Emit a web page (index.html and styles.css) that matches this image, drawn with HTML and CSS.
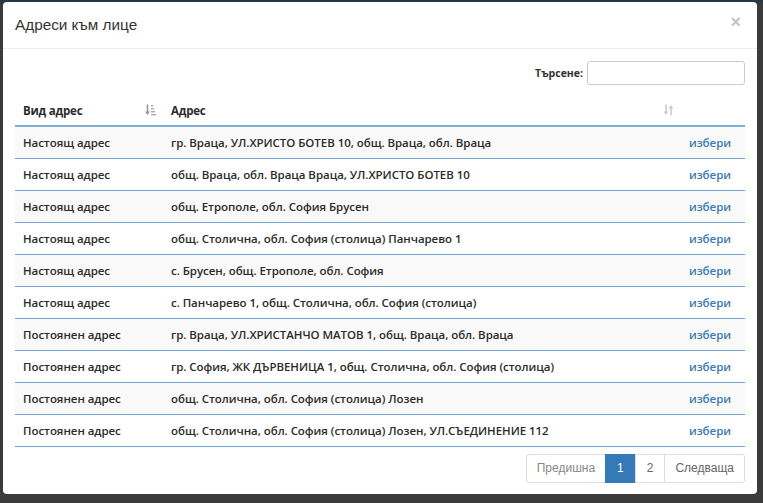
FILE: index.html
```html
<!DOCTYPE html>
<html lang="bg">
<head><meta charset="utf-8"><link rel="stylesheet" href="styles.css"></head>
<body>
<div class="backdrop">
  <div class="modal">
    <div class="modal-header">
      <h4 class="title">Адреси към лице</h4>
      <span class="close">×</span>
    </div>
    <div class="modal-body">
      <div class="search">
        <label>Търсене:</label>
        <input type="text" class="search-input">
      </div>
      <table class="grid">
        <thead>
          <tr>
            <th class="c1"><div class="th-in"><span>Вид адрес</span>
              <svg class="sort-ico" width="11" height="12" viewBox="0 0 11 12"><path d="M2.5 0.5v9" stroke="#999" stroke-width="1.6"/><path d="M0 7.5l2.5 3.5 2.5-3.5z" fill="#999"/><rect x="6" y="1" width="2" height="1.4" fill="#aaa"/><rect x="6" y="4" width="3" height="1.4" fill="#aaa"/><rect x="6" y="7" width="4" height="1.4" fill="#aaa"/><rect x="6" y="10" width="5" height="1.4" fill="#aaa"/></svg></div></th>
            <th class="c2"><div class="th-in"><span>Адрес</span>
              <svg class="sort-ico light" width="11" height="12" viewBox="0 0 11 12"><path d="M3 0.5v9" stroke="#ccc" stroke-width="1.6"/><path d="M0.5 7.5l2.5 3.5 2.5-3.5z" fill="#ccc"/><path d="M8 2.5v9" stroke="#ccc" stroke-width="1.6"/><path d="M5.5 4.5l2.5-3.5 2.5 3.5z" fill="#ccc"/></svg></div></th>
            <th class="c3"></th>
          </tr>
        </thead>
        <tbody>
          <tr><td>Настоящ адрес</td><td>гр. Враца, УЛ.ХРИСТО БОТЕВ 10, общ. Враца, обл. Враца</td><td><a>избери</a></td></tr>
          <tr><td>Настоящ адрес</td><td>общ. Враца, обл. Враца Враца, УЛ.ХРИСТО БОТЕВ 10</td><td><a>избери</a></td></tr>
          <tr><td>Настоящ адрес</td><td>общ. Етрополе, обл. София Брусен</td><td><a>избери</a></td></tr>
          <tr><td>Настоящ адрес</td><td>общ. Столична, обл. София (столица) Панчарево 1</td><td><a>избери</a></td></tr>
          <tr><td>Настоящ адрес</td><td>с. Брусен, общ. Етрополе, обл. София</td><td><a>избери</a></td></tr>
          <tr><td>Настоящ адрес</td><td>с. Панчарево 1, общ. Столична, обл. София (столица)</td><td><a>избери</a></td></tr>
          <tr><td>Постоянен адрес</td><td>гр. Враца, УЛ.ХРИСТАНЧО МАТОВ 1, общ. Враца, обл. Враца</td><td><a>избери</a></td></tr>
          <tr><td>Постоянен адрес</td><td>гр. София, ЖК ДЪРВЕНИЦА 1, общ. Столична, обл. София (столица)</td><td><a>избери</a></td></tr>
          <tr><td>Постоянен адрес</td><td>общ. Столична, обл. София (столица) Лозен</td><td><a>избери</a></td></tr>
          <tr><td>Постоянен адрес</td><td>общ. Столична, обл. София (столица) Лозен, УЛ.СЪЕДИНЕНИЕ 112</td><td><a>избери</a></td></tr>
        </tbody>
      </table>
      <div class="pager-row">
        <ul class="pagination">
          <li class="disabled">Предишна</li>
          <li class="active">1</li>
          <li>2</li>
          <li>Следваща</li>
        </ul>
      </div>
    </div>
  </div>
</div>
</body>
</html>
```
FILE: styles.css
```css
html, body {
  margin: 0;
  padding: 0;
  height: 100%;
}
body {
  background: #3b3b3b;
  font-family: "Open Sans", "Noto Sans", sans-serif;
}
.backdrop {
  background: linear-gradient(#223845 0, #2c3a42 3px, #3b3b3b 6px);
  padding: 2px 6px 10px 3px;
  height: 100%;
  box-sizing: border-box;
}
.modal {
  background: #fff;
  border-radius: 4px;
  width: 754px;
}
.modal-header {
  display: flex;
  align-items: center;
  justify-content: space-between;
  padding: 10px 12px 10px 12px;
  border-bottom: 1px solid #eeeeee;
}
.title {
  margin: 0;
  font-family: "Liberation Sans", Arial, sans-serif;
  font-weight: normal;
  font-size: 15.3px;
  line-height: 26px;
  color: #333;
}
.close {
  font-family: "Liberation Sans", Arial, sans-serif;
  font-size: 18px;
  font-weight: bold;
  color: #c4c4c4;
  line-height: 18px;
  margin-right: 4px;
  margin-top: -6px;
}
.modal-body {
  padding: 12px 12px 11px 12px;
}
.search {
  display: flex;
  justify-content: flex-end;
  align-items: center;
  gap: 4px;
  margin-bottom: 10px;
}
.search label {
  font-size: 10.5px;
  font-weight: 700;
  color: #333;
}
.search-input {
  width: 158px;
  height: 24px;
  box-sizing: border-box;
  border: 1px solid #ccc;
  border-radius: 3px;
  margin: 0;
}
.grid {
  width: 100%;
  border-collapse: collapse;
  font-size: 11.5px;
  color: #2b2b2b;
}
.grid th {
  text-align: left;
  font-weight: 700;
  height: 30px;
  padding: 0 8px;
  border-bottom: 2px solid #7eb0d6;
  letter-spacing: -0.2px;
}
.th-in {
  display: flex;
  align-items: center;
  justify-content: space-between;
}
.c1 { width: 132px; }
.c3 { width: 48px; }
.sort-ico { margin-right: -1px; }
.grid td {
  height: 31px;
  padding: 0 8px;
  border-top: 1px solid #6fa5d0;
  white-space: nowrap;
  font-weight: 600;
  letter-spacing: -0.05px;
}
.grid tbody tr:nth-child(odd) td { background: #f9f9f9; }
.grid tbody tr:last-child td { border-bottom: 1px solid #6fa5d0; }
.grid td a {
  color: #3a7bb3;
  display: block;
  text-align: right;
  padding-right: 6px;
}
.pager-row {
  display: flex;
  justify-content: flex-end;
  margin-top: 7px;
}
.pagination {
  display: flex;
  list-style: none;
  margin: 0;
  padding: 0;
  font-family: "Liberation Sans", Arial, sans-serif;
  font-size: 12px;
}
.pagination li {
  height: 27px;
  line-height: 27px;
  padding: 0 10px;
  border: 1px solid #ddd;
  margin-left: -1px;
  color: #666;
  background: #fff;
}
.pagination li.active, .pagination li:nth-child(3) { padding: 0 11px; }
.pagination li:first-child { border-radius: 3px 0 0 3px; }
.pagination li:last-child { border-radius: 0 3px 3px 0; }
.pagination li.disabled { color: #888; }
.pagination li.active {
  background: #337ab7;
  border-color: #337ab7;
  color: #fff;
}
```
